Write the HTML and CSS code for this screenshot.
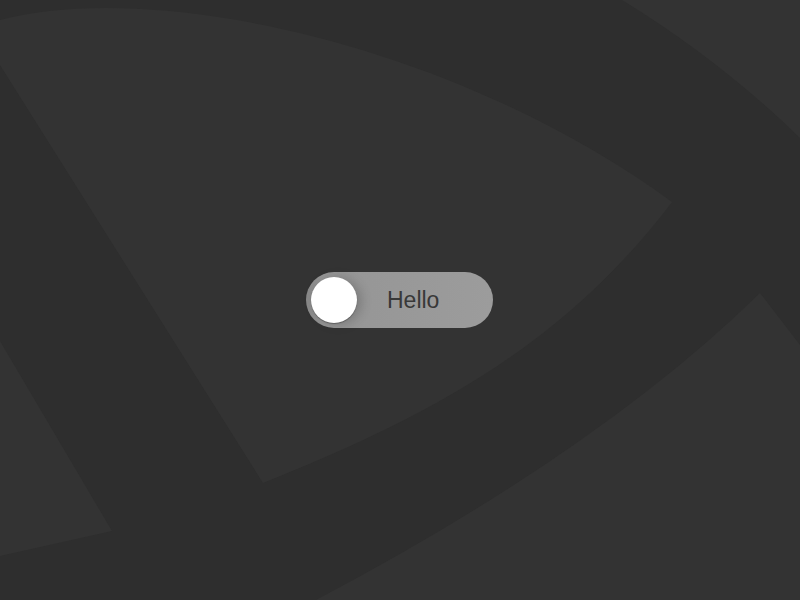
FILE: index.html
```html
<!DOCTYPE html>
<html lang="en">

<head>
    <meta charset="UTF-8">
    <meta name="viewport" content="width=device-width, initial-scale=1.0">
    <title>Toggle</title>
    <link rel="stylesheet" href="styles.css">
</head>

<body>
    <!-- background shapes -->
    <svg class="backdrop" viewBox="0 0 800 600" preserveAspectRatio="none">
        <path d="M0,20 C150,-20 450,40 672,202 C560,350 420,420 263,483 L0,65 Z" />
        <path d="M622,0 Q720,60 800,138 L800,0 Z" />
        <path d="M316,600 Q600,450 760,293 L800,345 L800,600 Z" />
        <path d="M0,341 L112,531 L0,556 Z" />
    </svg>

    <label class="toggle">
        <span class="knob"></span>
        <span class="label">Hello</span>
    </label>
</body>

</html>
```

FILE: styles.css
```css
html,
body {
    width: 100%;
    height: 100%;
    margin: 0;
}

body {
    display: flex;
    align-items: center;
    justify-content: center;
    background: #2e2e2e;
    font-family: "Liberation Sans", Arial, sans-serif;
    overflow: hidden;
}

.backdrop {
    position: fixed;
    top: 0;
    left: 0;
    width: 100%;
    height: 100%;
    z-index: 0;
}

.backdrop path {
    fill: #333333;
}

.toggle {
    position: relative;
    z-index: 1;
    display: flex;
    align-items: center;
    box-sizing: border-box;
    width: 187px;
    height: 56px;
    margin-left: -1px;
    padding: 5px;
    border-radius: 28px;
    background: linear-gradient(to right, #888 0, #959595 16px, #9c9c9c 100%);
}

.knob {
    width: 46px;
    height: 46px;
    border-radius: 50%;
    background: #fff;
    box-shadow: 0 1px 1px rgba(0, 0, 0, 0.3), 4px 1px 12px rgba(0, 0, 0, 0.2);
}

.label {
    margin-left: 30px;
    font-size: 23px;
    color: #383838;
}
```
